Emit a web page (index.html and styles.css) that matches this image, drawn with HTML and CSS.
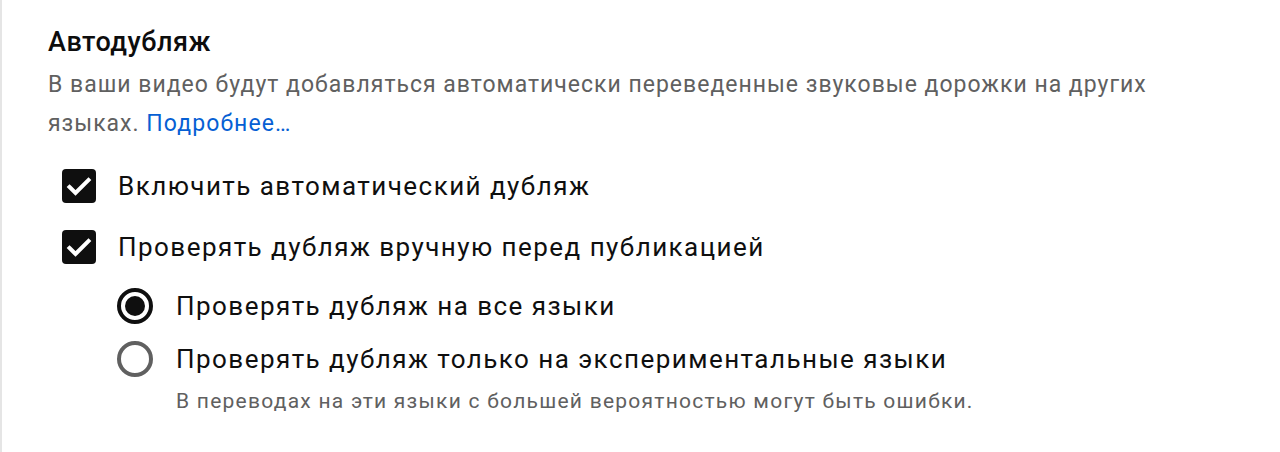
FILE: index.html
```html
<!DOCTYPE html>
<html lang="ru">
<head>
<meta charset="utf-8">
<link rel="stylesheet" href="styles.css">
</head>
<body>
<section class="panel">
  <h2 class="title">Автодубляж</h2>
  <p class="desc">В ваши видео будут добавляться автоматически переведенные звуковые дорожки на других языках. <a class="link" href="#">Подробнее…</a></p>
  <div class="options">
    <div class="check-row">
      <span class="box"><svg viewBox="0 0 34 34" width="34" height="34"><path d="M7.5 18 L13.5 24 L26.5 11" fill="none" stroke="#fff" stroke-width="4" stroke-linecap="square"/></svg></span>
      <span class="label">Включить автоматический дубляж</span>
    </div>
    <div class="check-row">
      <span class="box"><svg viewBox="0 0 34 34" width="34" height="34"><path d="M7.5 18 L13.5 24 L26.5 11" fill="none" stroke="#fff" stroke-width="4" stroke-linecap="square"/></svg></span>
      <span class="label">Проверять дубляж вручную перед публикацией</span>
    </div>
    <div class="radios">
      <div class="radio-row">
        <span class="radio on"></span>
        <span class="label">Проверять дубляж на все языки</span>
      </div>
      <div class="radio-row">
        <span class="radio"></span>
        <div class="radio-text">
          <span class="label">Проверять дубляж только на экспериментальные языки</span>
          <span class="hint">В переводах на эти языки с большей вероятностью могут быть ошибки.</span>
        </div>
      </div>
    </div>
  </div>
</section>
</body>
</html>
```
FILE: styles.css
```css
html, body {
  margin: 0;
  padding: 0;
  background: #fff;
}
body {
  font-family: Roboto, "Liberation Sans", sans-serif;
  color: #0f0f0f;
}
.panel {
  border-left: 2px solid #e5e5e5;
  min-height: 452px;
  box-sizing: border-box;
  padding: 26px 0 0 46px;
}
.title {
  margin: 0;
  font-size: 27px;
  font-weight: 500;
  letter-spacing: 0.5px;
  line-height: 32px;
  color: #0d0d0d;
}
.desc {
  margin: 7px 0 0;
  width: 1150px;
  font-size: 23px;
  letter-spacing: 1px;
  line-height: 39px;
  color: #606060;
}
.link {
  color: #065fd4;
  text-decoration: none;
  letter-spacing: 1.1px;
}
.options {
  display: flex;
  flex-direction: column;
  margin-top: 26px;
  padding-left: 14px;
}
.check-row {
  display: flex;
  align-items: center;
  height: 34px;
  margin-bottom: 27px;
}
.box {
  width: 34px;
  height: 34px;
  border-radius: 4px;
  background: #0f0f0f;
  display: flex;
  flex-shrink: 0;
}
.label {
  font-size: 26px;
  letter-spacing: 1.45px;
  line-height: 34px;
  color: #0f0f0f;
}
.check-row .label {
  margin-left: 22px;
}
.radios {
  display: flex;
  flex-direction: column;
  padding-left: 55px;
  margin-top: -3px;
  gap: 17px;
}
.radio-row {
  display: flex;
  align-items: flex-start;
}
.radio {
  width: 36px;
  height: 36px;
  box-sizing: border-box;
  border-radius: 50%;
  border: 4px solid #606060;
  flex-shrink: 0;
  position: relative;
}
.radio.on {
  border-color: #0f0f0f;
}
.radio.on::after {
  content: "";
  position: absolute;
  left: 4px;
  top: 4px;
  width: 20px;
  height: 20px;
  border-radius: 50%;
  background: #0f0f0f;
}
.radio-row .label {
  margin-left: 23px;
  line-height: 36px;
}
.radio-text {
  display: flex;
  flex-direction: column;
}
.hint {
  margin-left: 23px;
  margin-top: 11px;
  font-size: 21px;
  letter-spacing: 1.25px;
  line-height: 26px;
  color: #606060;
}
```
